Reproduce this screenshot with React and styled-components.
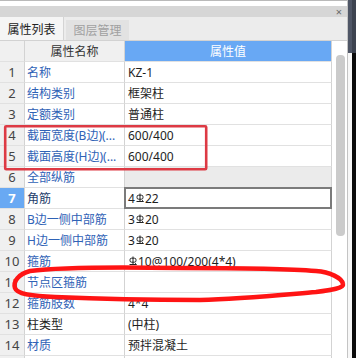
import React from "react";
import styled, { createGlobalStyle } from "styled-components";

const GlobalStyle = createGlobalStyle`
body {
  margin: 0;
  background: #ffffff;
  overflow: hidden;
}
`

const Page = styled.div`
position: relative;
display: flex;
align-items: flex-start;
width: 356px;
height: 358px;
overflow: hidden;
font-family: "Noto Sans", "Noto Sans CJK SC", sans-serif;
`
const Panel = styled.div`
display: flex;
flex-direction: column;
width: 348px;
flex-shrink: 0;
border-right: 1px solid #c4c4c4;
box-sizing: border-box;
& > * {
  flex-shrink: 0;
}
`
const TopStrip = styled.div`
height: 6px;
border-top: 1px solid #b9b9b9;
box-sizing: border-box;
background: #ffffff;
`
const TitleBar = styled.div`
height: 11px;
background: #d6d6d6;
display: flex;
align-items: center;
justify-content: flex-end;
padding-right: 5px;
`
const Close = styled.span`
font-size: 11px;
line-height: 11px;
color: #6a6a6a;
`
const TabRow = styled.div`
height: 24px;
box-sizing: border-box;
display: flex;
align-items: flex-end;
background: #ececec;
border-bottom: 1px solid #d2d2d2;
`
const Tab = styled.div`
width: ${p => (p.$active ? "64px" : "63px")};
height: ${p => (p.$active ? "23px" : "20px")};
margin-left: ${p => (p.$active ? "0" : "2px")};
display: flex;
align-items: center;
justify-content: center;
font-size: 12px;
color: ${p => (p.$active ? "#222222" : "#a0a0a0")};
background: ${p => (p.$active ? "#f5f5f5" : "#e2e2e2")};
border-right: ${p => (p.$active ? "1px solid #d4d4d4" : "none")};
box-sizing: border-box;
`
const Body = styled.div`
display: flex;
`
const Grid = styled.div`
display: grid;
grid-template-columns: 25px 100px 207px;
grid-auto-rows: 21px;
width: 332px;
`
const Cell = styled.div`
position: relative;
box-sizing: border-box;
border-right: 1px solid #d3d3d3;
border-bottom: 1px solid #e1e1e1;
display: flex;
align-items: center;
white-space: nowrap;
font-size: 12px;
`
const NumCell = styled(Cell)`
justify-content: center;
font-size: 13px;
background: ${p => (p.$selected ? "#69a9f3" : "#f0f0f0")};
color: ${p => (p.$selected ? "#ffffff" : "#444444")};
font-weight: ${p => (p.$selected ? 700 : 400)};
`
const HeadCell = styled(Cell)`
justify-content: center;
background: ${p => (p.$blue ? "#68a8f4" : "#f0f0f0")};
color: ${p => (p.$blue ? "#ffffff" : "#333333")};
`
const NameCell = styled(Cell)`
padding-left: 2px;
color: ${p => (p.$plain ? "#1c1c1c" : p.$dark ? "#253d6b" : "#2f62b6")};
background: #ffffff;
`
const ValueCell = styled(Cell)`
padding-left: 3px;
color: #1e1e1e;
background: ${p => (p.$group ? "#ebebeb" : "#ffffff")};
&::after {
  content: "";
  display: ${p => (p.$selected ? "block" : "none")};
  position: absolute;
  top: -1px;
  left: -1px;
  right: -1px;
  bottom: -1px;
  border: 2px solid #7b7b7b;
}
`
const ScrollTrack = styled.div`
flex: 1;
background: #ffffff;
padding: 14px 0 0 4px;
`
const Thumb = styled.div`
width: 9px;
height: 181px;
border-radius: 4px;
background: #cbcbcb;
`
const RightEdge = styled.div`
display: flex;
flex: 1;
align-self: stretch;
`
const EdgeInner = styled.div`
width: 4px;
background: linear-gradient(#4f5666 0, #4f5666 53px, #f7f7f7 53px);
`
const EdgeOuter = styled.div`
flex: 1;
background: linear-gradient(#3d4350 0, #3d4350 53px, #0b0b0b 53px);
`
const Overlay = styled.svg`
position: absolute;
top: 0;
left: 0;
pointer-events: none;
`
const BarSvg = styled.svg`
vertical-align: 2px;
margin: 0 1px 0 1px;
`

// HRB400 steel symbol
function Rebar() {
  return (
    <BarSvg width="8" height="10" viewBox="0 0 8 10" fill="none" stroke="#222" strokeWidth="1">
      <line x1="4" y1="0.5" x2="4" y2="8.5" />
      <rect x="1" y="2.2" width="6" height="4" rx="1.6" />
      <path d="M0.5 8.5 H7.5 M6.2 7.2 L7.4 8.4" />
    </BarSvg>
  )
}

function renderValue(text) {
  const parts = text.split("%");
  return parts.map((p, i) => (
    <React.Fragment key={i}>
      {i > 0 && <Rebar />}
      {p}
    </React.Fragment>
  ))
}

const rows = [
  { name: "名称", value: "KZ-1" },
  { name: "结构类别", value: "框架柱" },
  { name: "定额类别", value: "普通柱" },
  { name: "截面宽度(B边)(...", value: "600/400" },
  { name: "截面高度(H边)(...", value: "600/400" },
  { name: "全部纵筋", value: "", group: true },
  { name: "角筋", value: "4%22", selected: true, dark: true },
  { name: "B边一侧中部筋", value: "3%20" },
  { name: "H边一侧中部筋", value: "3%20" },
  { name: "箍筋", value: "%10@100/200(4*4)" },
  { name: "节点区箍筋", value: "" },
  { name: "箍筋肢数", value: "4*4" },
  { name: "柱类型", value: "(中柱)", plain: true },
  { name: "材质", value: "预拌混凝土" },
];

export default function App() {
  return (
    <Page>
      <GlobalStyle />
      <Panel>
        <TopStrip />
        <TitleBar>
          <Close>×</Close>
        </TitleBar>
        <TabRow>
          <Tab $active>属性列表</Tab>
          <Tab>图层管理</Tab>
        </TabRow>
        <Body>
          <Grid>
            <HeadCell />
            <HeadCell>属性名称</HeadCell>
            <HeadCell $blue>属性值</HeadCell>
            {rows.map((r, i) => (
              <React.Fragment key={i}>
                <NumCell $selected={r.selected}>{i + 1}</NumCell>
                <NameCell $plain={r.plain} $dark={r.dark}>{r.name}</NameCell>
                <ValueCell $group={r.group} $selected={r.selected}>{renderValue(r.value)}</ValueCell>
              </React.Fragment>
            ))}
            <NumCell />
            <NameCell />
            <ValueCell />
          </Grid>
          <ScrollTrack>
            <Thumb />
          </ScrollTrack>
        </Body>
      </Panel>
      <RightEdge>
        <EdgeInner />
        <EdgeOuter />
      </RightEdge>
      <Overlay width="356" height="358" viewBox="0 0 356 358">
        <rect x="5.2" y="126.2" width="201" height="43" rx="1" fill="none" stroke="#dd3a44" strokeWidth="2.6" />
        <path
          d="M180 268 C120 267 60 267 30 271 C18 274 13 282 15 288 C17 294 30 296 55 297 C100 299 150 300 200 300 C240 299 280 295 316 292 C332 290 344 288 343 284 C342 278 330 272 316 271 C280 268 230 268 180 268 Z"
          fill="none"
          stroke="#ff1414"
          strokeWidth="4.5"
          strokeLinejoin="round"
        />
      </Overlay>
    </Page>
  )
}
